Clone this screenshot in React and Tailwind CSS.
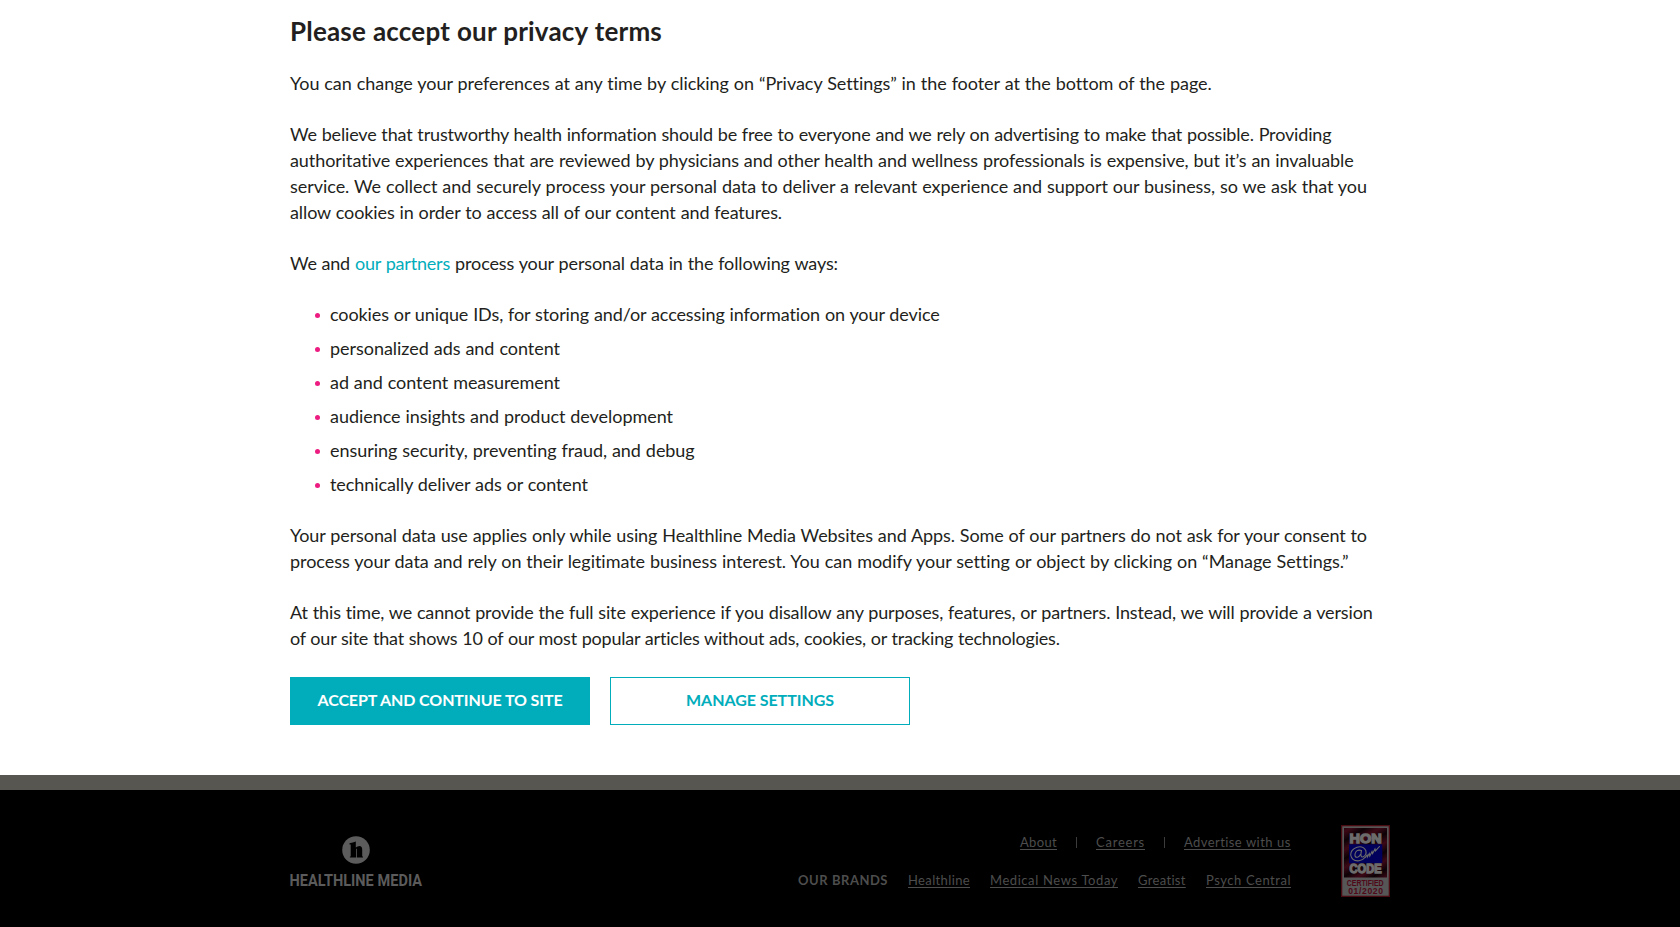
import { useLayoutEffect, useRef, useState } from "react";

// Sets one line of text to a given measure by adjusting its tracking.
function Line({ w, className = "", children }) {
  const ref = useRef(null);
  const [spacing, setSpacing] = useState(0);
  useLayoutEffect(() => {
    const natural = ref.current.getBoundingClientRect().width;
    setSpacing((w - natural) / children.length);
  }, []);
  return (
    <span className="block whitespace-nowrap" style={{ width: w }}>
      <span ref={ref} className={"inline-block " + className} style={{ letterSpacing: spacing }}>
        {children}
      </span>
    </span>
  );
}

const items = [
  ["cookies or unique IDs, for storing and/or accessing information on your device", 610],
  ["personalized ads and content", 230],
  ["ad and content measurement", 230],
  ["audience insights and product development", 343],
  ["ensuring security, preventing fraud, and debug", 365],
  ["technically deliver ads or content", 258],
];

const link = "underline underline-offset-[2px] decoration-1";

function HonBadge() {
  return (
    <svg className="ml-[50px] mr-[290px] mt-[35px] h-[72px] w-[49px]" viewBox="0 0 49 72" fontFamily="Liberation Sans, sans-serif" fontWeight="700">
      <defs>
        <linearGradient id="sheen" x1="0" y1="0" x2="8" y2="13" gradientUnits="userSpaceOnUse" spreadMethod="repeat">
          <stop offset="0" stopColor="#0c0206" />
          <stop offset="0.5" stopColor="#3c0816" />
          <stop offset="1" stopColor="#0c0206" />
        </linearGradient>
      </defs>
      <rect width="49" height="72" fill="#4a0a12" />
      <rect x="1.3" y="1.3" width="46.4" height="69.4" fill="#565656" />
      <rect x="3" y="3" width="43" height="49.5" fill="url(#sheen)" />
      <rect x="8" y="19.3" width="33.3" height="19" fill="#00005c" />
      <g fill="#6c6c6c" stroke="#6c6c6c" strokeWidth="1.3">
        <text x="8.5" y="18.4" fontSize="13.4" textLength="32.2" lengthAdjust="spacingAndGlyphs">HON</text>
        <text x="8.5" y="48" fontSize="12.4" textLength="32.2" lengthAdjust="spacingAndGlyphs">CODE</text>
      </g>
      <g fill="none" stroke="#6c6c6c" strokeWidth="1.1" strokeLinecap="round">
        <path d="M20.5 25.5 Q15 24 14 29 Q13.5 33 17 32 Q20 30.5 20.5 25.5 Q18.8 32.5 22 32 Q26 30 24.8 25.5 Q22 20.5 16 22.2 Q9.5 24.5 9.7 30 Q11 36.5 18 35.8 Q22 35 24 32.5" />
        <path d="M24 32.5 L26 30 L26.3 32 L28.3 28.5 L28.8 31 L31 26.5 L31.6 28.6 L34 24 L34.5 25.8 L38.5 21.5" />
      </g>
      <g fill="#4e0818">
        <text x="5.7" y="61.4" fontSize="8.6" textLength="37" lengthAdjust="spacingAndGlyphs">CERTIFIED</text>
        <text x="7.2" y="69.3" fontSize="8.6" textLength="34.8">01/2020</text>
      </g>
    </svg>
  );
}

function Footer() {
  return (
    <footer className="flex h-[137px] bg-black pl-[284px] text-[13px] text-[#4d4d4d]">
      <svg className="mt-[46px] h-[64px] w-[145px]" viewBox="-6 0 145 64">
        <circle cx="66" cy="14" r="13.8" fill="#5c5c5c" />
        <path d="M59.5 7.2 Q63 7 65.8 5.6 V11.5 Q67.5 10 69.5 10 Q72.2 10 72.2 13.5 V20.4 H73 V21.4 H66.8 V12.4 L66 13 V21.4 H59.9 V20.4 H60.7 V8.6 H59.5 Z" fill="#000" />
        <text x="-0.5" y="50" fontSize="16.4" fontWeight="700" textLength="132.5" lengthAdjust="spacingAndGlyphs" fill="#5b5b5b" fontFamily="Roboto, sans-serif">HEALTHLINE MEDIA</text>
      </svg>
      <div className="ml-auto mt-[42px] flex flex-col items-end gap-[18px] leading-5">
        <div className="flex">
          <a><Line w={37} className={link}>About</Line></a>
          <span className="ml-[19px] mt-[5px] h-[11px] w-px bg-[#3c3c3c]" />
          <a className="ml-[19px]"><Line w={49} className={link}>Careers</Line></a>
          <span className="ml-[19px] mt-[5px] h-[11px] w-px bg-[#3c3c3c]" />
          <a className="ml-[19px]"><Line w={107} className={link}>Advertise with us</Line></a>
        </div>
        <div className="flex gap-5">
          <Line w={90} className="font-bold">OUR BRANDS</Line>
          <a><Line w={62} className={link}>Healthline</Line></a>
          <a><Line w={128} className={link}>Medical News Today</Line></a>
          <a><Line w={48} className={link}>Greatist</Line></a>
          <a><Line w={85} className={link}>Psych Central</Line></a>
        </div>
      </div>
      <HonBadge />
    </footer>
  );
}

export default function App() {
  return (
    <div className="h-[927px] w-[1680px] overflow-hidden bg-white font-['Lato',sans-serif] text-[#231f20] [word-spacing:0.4px]">
      <main className="flex h-[775px] flex-col gap-[25px] pl-[290px] pt-[13px] text-[18px] leading-[26px]">
        <h1 className="-mb-[4px] text-[26px] font-bold leading-9"><Line w={372}>Please accept our privacy terms</Line></h1>
        <p><Line w={921}>You can change your preferences at any time by clicking on “Privacy Settings” in the footer at the bottom of the page.</Line></p>
        <p>
          <Line w={1042}>We believe that trustworthy health information should be free to everyone and we rely on advertising to make that possible. Providing</Line>
          <Line w={1064}>authoritative experiences that are reviewed by physicians and other health and wellness professionals is expensive, but it’s an invaluable</Line>
          <Line w={1077}>service. We collect and securely process your personal data to deliver a relevant experience and support our business, so we ask that you</Line>
          <Line w={492}>allow cookies in order to access all of our content and features.</Line>
        </p>
        <p className="flex gap-[5px]">
          <Line w={60}>We and</Line>
          <a className="text-[#02adbb]"><Line w={95}>our partners</Line></a>
          <Line w={383}>process your personal data in the following ways:</Line>
        </p>
        <ul className="flex flex-col gap-2 pl-[25px]">
          {items.map(([text, w]) => (
            <li key={text} className="flex items-center gap-[10px]">
              <span className="mt-[2px] size-[5px] rounded-full bg-[#ed1c81]" />
              <Line w={w}>{text}</Line>
            </li>
          ))}
        </ul>
        <p>
          <Line w={1077}>Your personal data use applies only while using Healthline Media Websites and Apps. Some of our partners do not ask for your consent to</Line>
          <Line w={1058}>process your data and rely on their legitimate business interest. You can modify your setting or object by clicking on “Manage Settings.”</Line>
        </p>
        <p>
          <Line w={1083}>At this time, we cannot provide the full site experience if you disallow any purposes, features, or partners. Instead, we will provide a version</Line>
          <Line w={770}>of our site that shows 10 of our most popular articles without ads, cookies, or tracking technologies.</Line>
        </p>
        <div className="mt-px flex gap-5 text-[16px] font-bold [word-spacing:1px]">
          <button className="flex h-12 w-[300px] items-center justify-center bg-[#02adbb] pb-[2px] text-white"><Line w={245}>ACCEPT AND CONTINUE TO SITE</Line></button>
          <button className="flex h-12 w-[300px] items-center justify-center border border-[#02adbb] pb-[2px] text-[#02adbb]"><Line w={148}>MANAGE SETTINGS</Line></button>
        </div>
      </main>
      <div className="h-[15px] bg-[#575650]" />
      <Footer />
    </div>
  );
}
